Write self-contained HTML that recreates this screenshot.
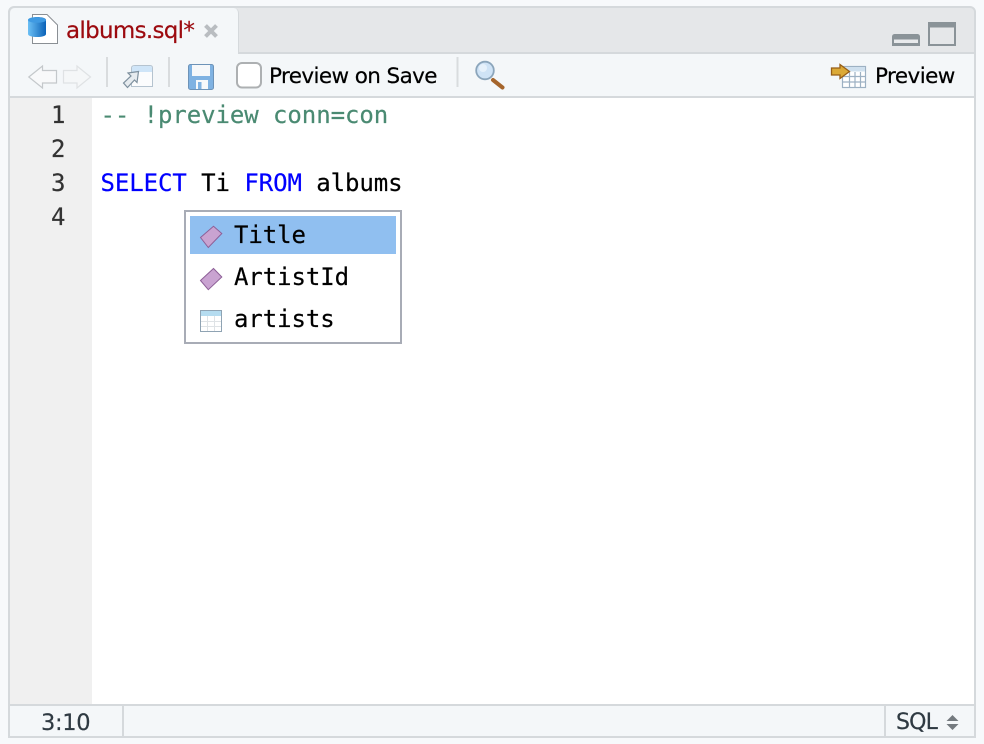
<!DOCTYPE html>
<html><head><meta charset="utf-8">
<style>
html,body{margin:0;padding:0;width:984px;height:744px;overflow:hidden;background:#f7f9fb}
*{box-sizing:border-box}
.a{position:absolute}
.ui{font-family:"DejaVu Sans",sans-serif;white-space:nowrap;-webkit-text-stroke:.2px currentColor}
.m{font-family:"DejaVu Sans Mono",monospace;font-size:24px;line-height:34px;white-space:pre;letter-spacing:-0.07px;-webkit-text-stroke:.2px currentColor}
svg{position:absolute;overflow:visible}
</style></head><body>
<div class="a" style="left:8px;top:6px;width:968px;height:732px;border:2px solid #d5d9dc;border-radius:6px 6px 0 0;background:#e5e7e9"></div>
<div class="a" style="left:10px;top:8px;width:229px;height:46px;background:#f4f7f9;border-radius:5px 5px 0 0;border-right:1px solid #d5d9dc"></div>
<div class="a" style="left:239px;top:52px;width:735px;height:2px;background:#d5d9dc"></div>
<div class="a" style="left:10px;top:54px;width:964px;height:42px;background:#f4f7f9"></div>
<div class="a" style="left:10px;top:96px;width:964px;height:2px;background:#d5d9dc"></div>
<div class="a" style="left:10px;top:98px;width:964px;height:606px;background:#fff"></div>
<div class="a" style="left:10px;top:98px;width:82px;height:606px;background:#f0f0f0"></div>
<div class="a" style="left:10px;top:704px;width:964px;height:2px;background:#d5d9dc"></div>
<div class="a" style="left:10px;top:706px;width:964px;height:30px;background:#f4f7f9"></div>
<div class="a" style="left:122px;top:706px;width:2px;height:30px;background:#d5d9dc"></div>
<div class="a" style="left:884px;top:706px;width:2px;height:30px;background:#d5d9dc"></div>

<svg style="left:0;top:0" width="984" height="100">
<defs><linearGradient id="g" x1="0" x2="1" y1="0" y2="0"><stop offset="0" stop-color="#6cc0f5"/><stop offset="1" stop-color="#0a62b8"/></linearGradient></defs>
<!-- file -->
<path d="M32.500 14.500H47L57.500 25V43.500H32.500Z" fill="#fff" stroke="#8a8f94"/>
<!-- cylinder -->
<path d="M28 20C28 16 46 16 46 20V34C46 38 28 38 28 34Z" fill="url(#g)"/>
<ellipse cx="37" cy="20" rx="9" ry="2.800" fill="#3f9ae2"/>
<!-- close -->
<path d="M205.500 25.500L216.500 36.500M216.500 25.500L205.500 36.500" stroke="#b9bdc1" stroke-width="4"/>
<!-- back/forward -->
<path d="M28.800 77L42.500 66V70.500H56.500V83H42.500V88Z" fill="#f8f9fa" stroke="#c4c8cb" stroke-width="1.200"/>
<path d="M90.500 77L77 66V70.500H63.500V83H77V88Z" fill="#f5f7f8" stroke="#dfe2e4" stroke-width="1.200"/>
<rect x="106" y="57" width="2" height="30" fill="#d9dcde"/>
<rect x="168" y="57" width="2" height="30" fill="#d9dcde"/>
<rect x="456.500" y="57" width="2" height="30" fill="#d9dcde"/>
<!-- popout -->
<path d="M131.500 86.500V68C131.500 66 133 65.500 135 65.500H150C151.500 65.500 152.500 66.500 152.500 68V86.500Z" fill="#fbfcfd" stroke="#b5c3cf"/>
<path d="M132 72V68C132 66.500 133 66 135 66H150C151.500 66 152 67 152 68V72Z" fill="#cfe5f8"/>
<path d="M138.500 71.500L128 73L131 76L123.500 83L127.500 87.500L134.500 80L137 82.500Z" fill="#e6ebef" stroke="#7e909e" stroke-width="1.200"/>
<!-- save -->
<rect x="188.500" y="64.500" width="25" height="25" rx="2" fill="#7fb2e2" stroke="#6d93b8"/>
<rect x="192" y="65" width="18" height="11" fill="#f6f8fa"/>
<rect x="196" y="80" width="12" height="9" fill="#f6f8fa"/>
<rect x="198" y="82" width="3.500" height="7" fill="#7fb2e2"/>
<!-- checkbox -->
<rect x="237" y="63" width="24" height="24.500" rx="5" fill="#fff" stroke="#adb0b2" stroke-width="2"/>
<!-- search -->
<path d="M493 80L502.500 87.500" stroke="#a5652c" stroke-width="4" stroke-linecap="round"/>
<circle cx="485" cy="70.500" r="8.800" fill="#cfe3f6" stroke="#8ba5bb" stroke-width="1.800"/>
<circle cx="483" cy="68" r="4" fill="#e6f1fb"/>
<!-- min/max -->
<path d="M892 46V37C892 35 893 34 895 34H917C919 34 920 35 920 37V46Z" fill="#8a9398"/>
<rect x="894" y="39.500" width="24" height="3.500" fill="#e8eaec"/>
<rect x="929" y="23" width="26" height="22" fill="#e5e7e9" stroke="#8a9398" stroke-width="2"/>
<path d="M928 27.500V25C928 23 929 22 931 22H953C955 22 956 23 956 25V27.500Z" fill="#8a9398"/>
<!-- preview table -->
<rect x="842.500" y="66.500" width="23" height="21" fill="#fff" stroke="#9db1c3" stroke-width="1.200"/>
<rect x="843" y="67" width="22" height="4.500" fill="#cfe0ee"/>
<path d="M842 76.500H866M842 82H866M849.500 72V88M855 72V88M860.500 72V88" stroke="#9db1c3" stroke-width="1.200"/>
<path d="M831.500 68H840V64.500L849.500 71.500L840 78.500V75H831.500Z" fill="#dba936" stroke="#975e17" stroke-width="1.300"/>
</svg>

<div class="a ui" style="left:66px;top:17px;font-size:23px;line-height:28px;color:#9c0a0f;letter-spacing:-.7px">albums.sql*</div>
<div class="a ui" style="left:269px;top:63px;font-size:21.500px;line-height:28px;color:#000;letter-spacing:-.6px">Preview on Save</div>
<div class="a ui" style="left:875px;top:63px;font-size:21.500px;line-height:28px;color:#000;letter-spacing:-.55px">Preview</div>

<div class="a m" style="left:51px;top:98px;color:#333">1
2
3
4</div>
<div class="a m" style="left:100.500px;top:98px;color:#000"><span style="color:#4a8a72">-- !preview conn=con</span>

<span style="color:#0000ff">SELECT</span> Ti <span style="color:#0000ff">FROM</span> albums</div>

<!-- popup -->
<div class="a" style="left:184px;top:210px;width:218px;height:134px;background:#fff;border:2px solid #a8acb6"></div>
<div class="a" style="left:190px;top:216px;width:206px;height:38px;background:#90bff0"></div>
<svg style="left:0;top:0" width="984" height="350">
<path d="M200.500 237.500L213.500 226.300L221.800 233.500L208.300 247.500Z" fill="#c9a3d1" stroke="#8d5f97"/>
<path d="M200.500 280.500L213.500 268.500L221.800 277L208.300 289.700Z" fill="#c9a3d1" stroke="#8d5f97"/>
<rect x="200.500" y="310.500" width="21" height="21" fill="#fff" stroke="#8fa3b3"/>
<rect x="201" y="311" width="20" height="5" fill="#b5dcf0"/>
<path d="M201 321.500H221M201 326.500H221M207.500 316V331M214.500 316V331" stroke="#dfe3e6"/>
</svg>
<div class="a m" style="left:234px;top:214px;color:#000;line-height:42px">Title
ArtistId
artists</div>

<div class="a ui" style="left:41px;top:709px;font-size:22.500px;line-height:28px;color:#2f3a42;letter-spacing:-.3px">3:10</div>
<div class="a ui" style="left:896px;top:709px;font-size:22px;line-height:28px;color:#2f3a42;letter-spacing:-.8px">SQL</div>
<svg style="left:0;top:0" width="984" height="744">
<path d="M952.500 715L958.500 721H946.500ZM946.500 724H958.500L952.500 730Z" fill="#747a7f"/>
</svg>
</body></html>
